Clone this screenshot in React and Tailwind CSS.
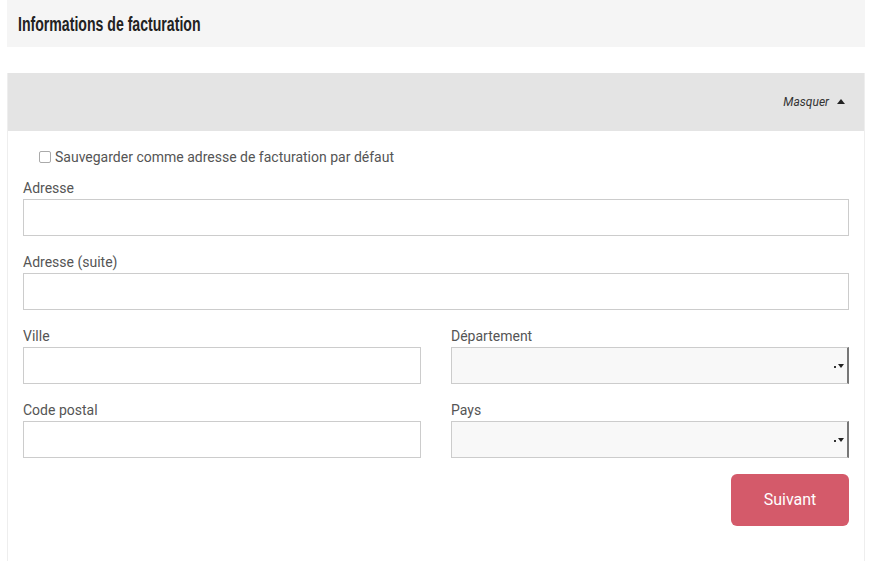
export default function App() {
  const inputCls = 'block w-full h-[37px] border border-[#ccc] bg-white'
  const selectCls =
    'relative block w-full h-[37px] border border-[#ccc] border-r-[2px] border-r-[#777] bg-[#f8f8f8]'
  const labelCls = 'block text-[14px] leading-5 text-[#555] mb-[1px] pt-[1px]'

  const Arrow = () => (
    <span className="absolute right-[3px] top-1/2 -translate-y-1/2 flex items-center gap-[2px]">
      <span className="block w-[2px] h-[2px] bg-[#333] mt-[2px]" />
      <svg width="6" height="4" viewBox="0 0 6 4">
        <path d="M0 0h6L3 4z" fill="#222" />
      </svg>
    </span>
  )

  return (
    <div className="min-h-screen bg-white px-[7px] pr-[8px]" style={{ fontFamily: 'Roboto, "Liberation Sans", sans-serif' }}>
      {/* Title */}
      <div className="h-[47px] bg-[#f5f5f5] flex items-center pl-[11px] pt-[1px]">
        <h2
          className="text-[20px] font-bold text-[#222] scale-x-[0.705] origin-left whitespace-nowrap"
          style={{ fontFamily: '"Liberation Sans", Arial, sans-serif' }}
        >
          Informations de facturation
        </h2>
      </div>

      {/* Panel */}
      <div className="mt-[26px] border-x border-[#eee] h-[488px]">
        <div className="h-[58px] bg-[#e4e4e4] flex items-center justify-end pr-[19px]">
          <span className="text-[12px] italic text-[#333]">Masquer</span>
          <svg className="ml-[8px] mb-[2px]" width="8" height="5" viewBox="0 0 8 5">
            <path d="M0 5L4 0l4 5z" fill="#222" />
          </svg>
        </div>

        <div className="px-[15px] pr-[15px]">
          <label className="flex items-center mt-[16px] pl-[16px] text-[14px] leading-5 text-[#555]">
            <span className="w-[12px] h-[12px] border border-[#aaa] rounded-[2px] bg-white mr-[4px]" />
            Sauvegarder comme adresse de facturation par défaut
          </label>

          <div className="mt-[10px]">
            <span className={labelCls}>Adresse</span>
            <div className={inputCls} />
          </div>

          <div className="mt-[15px]">
            <span className={labelCls}>Adresse (suite)</span>
            <div className={inputCls} />
          </div>

          <div className="grid grid-cols-2 gap-x-[30px]">
            <div className="mt-[15px]">
              <span className={labelCls}>Ville</span>
              <div className={inputCls} />
            </div>
            <div className="mt-[15px]">
              <span className={labelCls}>Département</span>
              <div className={selectCls}>
                <Arrow />
              </div>
            </div>
            <div className="mt-[15px]">
              <span className={labelCls}>Code postal</span>
              <div className={inputCls} />
            </div>
            <div className="mt-[15px]">
              <span className={labelCls}>Pays</span>
              <div className={selectCls}>
                <Arrow />
              </div>
            </div>
          </div>

          <div className="flex justify-end mt-[16px]">
            <button className="w-[118px] h-[52px] rounded-[6px] bg-[#d45a6a] text-white text-[16px]">
              Suivant
            </button>
          </div>
        </div>
      </div>
    </div>
  )
}
